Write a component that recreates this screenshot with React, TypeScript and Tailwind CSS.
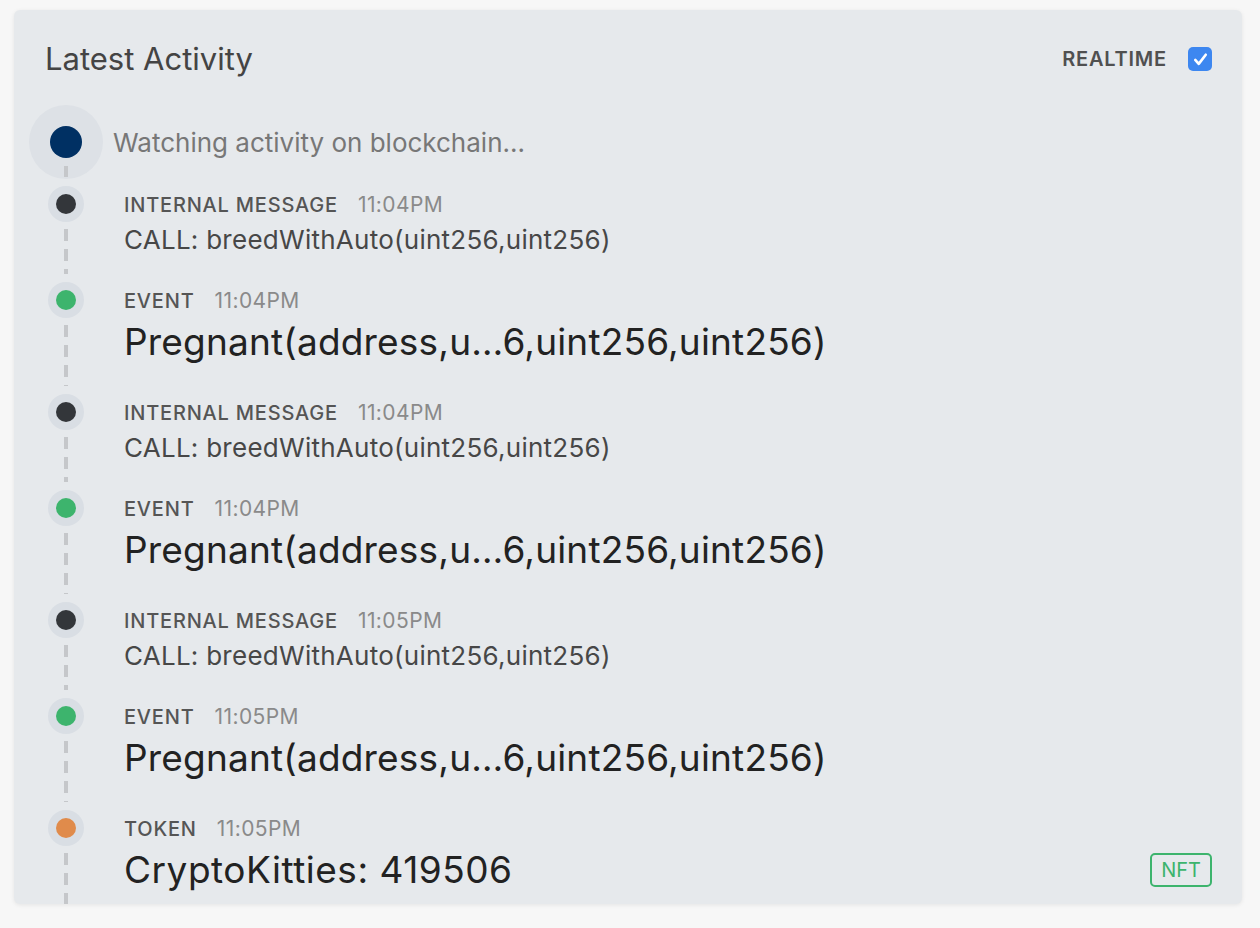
import React from "react";

type Item = {
  label: string;
  time: string;
  text: string;
  dot: string;
  big: boolean;
  badge?: string;
};

const items: Item[] = [
  { label: "INTERNAL MESSAGE", time: "11:04PM", text: "CALL: breedWithAuto(uint256,uint256)", dot: "bg-[#33363a]", big: false },
  { label: "EVENT", time: "11:04PM", text: "Pregnant(address,u…6,uint256,uint256)", dot: "bg-[#3db46d]", big: true },
  { label: "INTERNAL MESSAGE", time: "11:04PM", text: "CALL: breedWithAuto(uint256,uint256)", dot: "bg-[#33363a]", big: false },
  { label: "EVENT", time: "11:04PM", text: "Pregnant(address,u…6,uint256,uint256)", dot: "bg-[#3db46d]", big: true },
  { label: "INTERNAL MESSAGE", time: "11:05PM", text: "CALL: breedWithAuto(uint256,uint256)", dot: "bg-[#33363a]", big: false },
  { label: "EVENT", time: "11:05PM", text: "Pregnant(address,u…6,uint256,uint256)", dot: "bg-[#3db46d]", big: true },
  { label: "TOKEN", time: "11:05PM", text: "CryptoKitties: 419506", dot: "bg-[#e08b4b]", big: true, badge: "NFT" },
];

function Row({ item }: { item: Item }) {
  return (
    <div className={`flex ${item.big ? "h-[112px]" : "h-[96px]"}`}>
      <div className="w-[74px] shrink-0 flex flex-col items-center">
        <div className="w-[36px] h-[36px] rounded-full bg-[#d9dee4] flex items-center justify-center">
          <div className={`w-[20px] h-[20px] rounded-full ${item.dot}`} />
        </div>
        <div className="w-[4px] flex-1 mt-[7px] mb-[8px] bg-[repeating-linear-gradient(to_bottom,#c5c7ca_0px,#c5c7ca_12px,transparent_12px,transparent_20px)]" />
      </div>
      <div className="flex-1 min-w-0 pl-[21px]">
        <div className="h-[37px] flex items-center">
          <span className="text-[20px] font-medium tracking-[0.04em] text-[#555]">{item.label}</span>
          <span className="ml-[20px] text-[21px] tracking-[0.02em] text-[#8a8a8a]">{item.time}</span>
        </div>
        <div className="flex items-center justify-between">
          {item.big ? (
            <span className={`text-[37px] leading-[46px] text-[#222] ${item.badge ? "tracking-[0.014em]" : "tracking-[0.005em]"}`}>{item.text}</span>
          ) : (
            <span className="text-[26px] leading-[34px] tracking-[0.01em] text-[#474747]">{item.text}</span>
          )}
          {item.badge && (
            <span className="h-[34px] px-[9px] flex items-center rounded-[5px] border-2 border-[#3db46d] text-[20px] text-[#3db46d]">
              {item.badge}
            </span>
          )}
        </div>
      </div>
    </div>
  );
}

export default function App() {
  return (
    <div className="min-h-[928px] bg-[#f7f7f7] pt-[10px] font-[Inter,'Liberation_Sans',sans-serif]">
      <div className="ml-[14px] w-[1228px] h-[894px] overflow-hidden rounded-[6px] bg-[#e6e9ec] shadow-[0_1px_4px_rgba(0,0,0,0.08)]">
        <div className="flex items-center justify-between pl-[31px] pr-[30px] pt-[31px] h-[67px]">
          <h1 className="text-[31px] leading-[36px] text-[#444]">Latest Activity</h1>
          <div className="flex items-center">
            <span className="text-[20px] font-semibold tracking-[0.04em] text-[#505050]">REALTIME</span>
            <span className="ml-[21px] w-[24px] h-[24px] rounded-[5px] bg-[#3d87f0] flex items-center justify-center">
              <svg viewBox="0 0 24 24" className="w-[21px] h-[21px]" fill="none" stroke="#fff" strokeWidth="3" strokeLinecap="round" strokeLinejoin="round">
                <path d="M6 12.5l4 4.5L18 6.5" />
              </svg>
            </span>
          </div>
        </div>
        <div className="pl-[15px] pr-[30px] mt-[28px]">
          <div className="flex h-[81px]">
            <div className="w-[74px] shrink-0">
              <div className="relative w-[74px] h-[74px] rounded-full bg-[#dde1e6] flex items-center justify-center">
                <div className="w-[32px] h-[32px] rounded-full bg-[#003063]" />
                <div className="absolute left-[35px] top-[61px] w-[4px] h-[11px] bg-[#c5c7ca]" />
              </div>
            </div>
            <div className="pl-[10px] h-[75px] flex items-center">
              <span className="text-[26px] text-[#777]">Watching activity on blockchain...</span>
            </div>
          </div>
          {items.map((it, i) => (
            <Row key={i} item={it} />
          ))}
        </div>
      </div>
    </div>
  );
}
